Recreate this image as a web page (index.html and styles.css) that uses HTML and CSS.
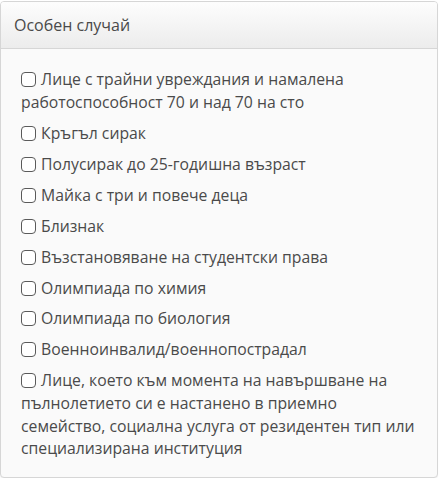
FILE: index.html
```html
<!DOCTYPE html>
<html lang="bg">
<head>
<meta charset="utf-8">
<link rel="stylesheet" href="styles.css">
</head>
<body>
<div class="panel">
  <div class="panel-heading">Особен случай</div>
  <div class="panel-body">
    <label class="item"><input type="checkbox"> Лице с трайни увреждания и намалена работоспособност 70 и над 70 на сто</label>
    <label class="item"><input type="checkbox"> Кръгъл сирак</label>
    <label class="item"><input type="checkbox"> Полусирак до 25-годишна възраст</label>
    <label class="item"><input type="checkbox"> Майка с три и повече деца</label>
    <label class="item"><input type="checkbox"> Близнак</label>
    <label class="item"><input type="checkbox"> Възстановяване на студентски права</label>
    <label class="item"><input type="checkbox"> Олимпиада по химия</label>
    <label class="item"><input type="checkbox"> Олимпиада по биология</label>
    <label class="item"><input type="checkbox"> Военноинвалид/военнопострадал</label>
    <label class="item"><input type="checkbox"> Лице, което към момента на навършване на пълнолетието си е настанено в приемно семейство, социална услуга от резидентен тип или специализирана институция</label>
  </div>
</div>
</body>
</html>
```
FILE: styles.css
```css
html, body {
  margin: 0;
  padding: 0;
  background: #ffffff;
}
body {
  font-family: "Open Sans", "Noto Sans", sans-serif;
  font-size: 15.75px;
  font-weight: 500;
  color: #4a4a4a;
}
.panel {
  width: 436px;
  margin: 1px 0 0 0;
  border: 1px solid #d6d6d6;
  border-radius: 4px;
  background: #fafafa;
  box-shadow: 0 1px 1px rgba(0,0,0,0.05);
}
.panel-heading {
  height: 46px;
  line-height: 46px;
  padding: 0 13px;
  font-size: 16px;
  border-bottom: 1px solid #d6d6d6;
  border-radius: 3px 3px 0 0;
  background: linear-gradient(to bottom, #fdfdfd 0%, #ececec 100%);
}
.panel-body {
  display: flex;
  flex-direction: column;
  gap: 8.4px;
  padding: 19px 19px 17px 20px;
}
.item {
  display: block;
  line-height: 22.6px;
}
.item input {
  width: 15px;
  height: 15px;
  margin: 0 1px 0 0;
  vertical-align: -2px;
  appearance: none;
  -webkit-appearance: none;
  border: 1.5px solid #5a5a5a;
  border-radius: 4px;
  background: #fff;
}
```
